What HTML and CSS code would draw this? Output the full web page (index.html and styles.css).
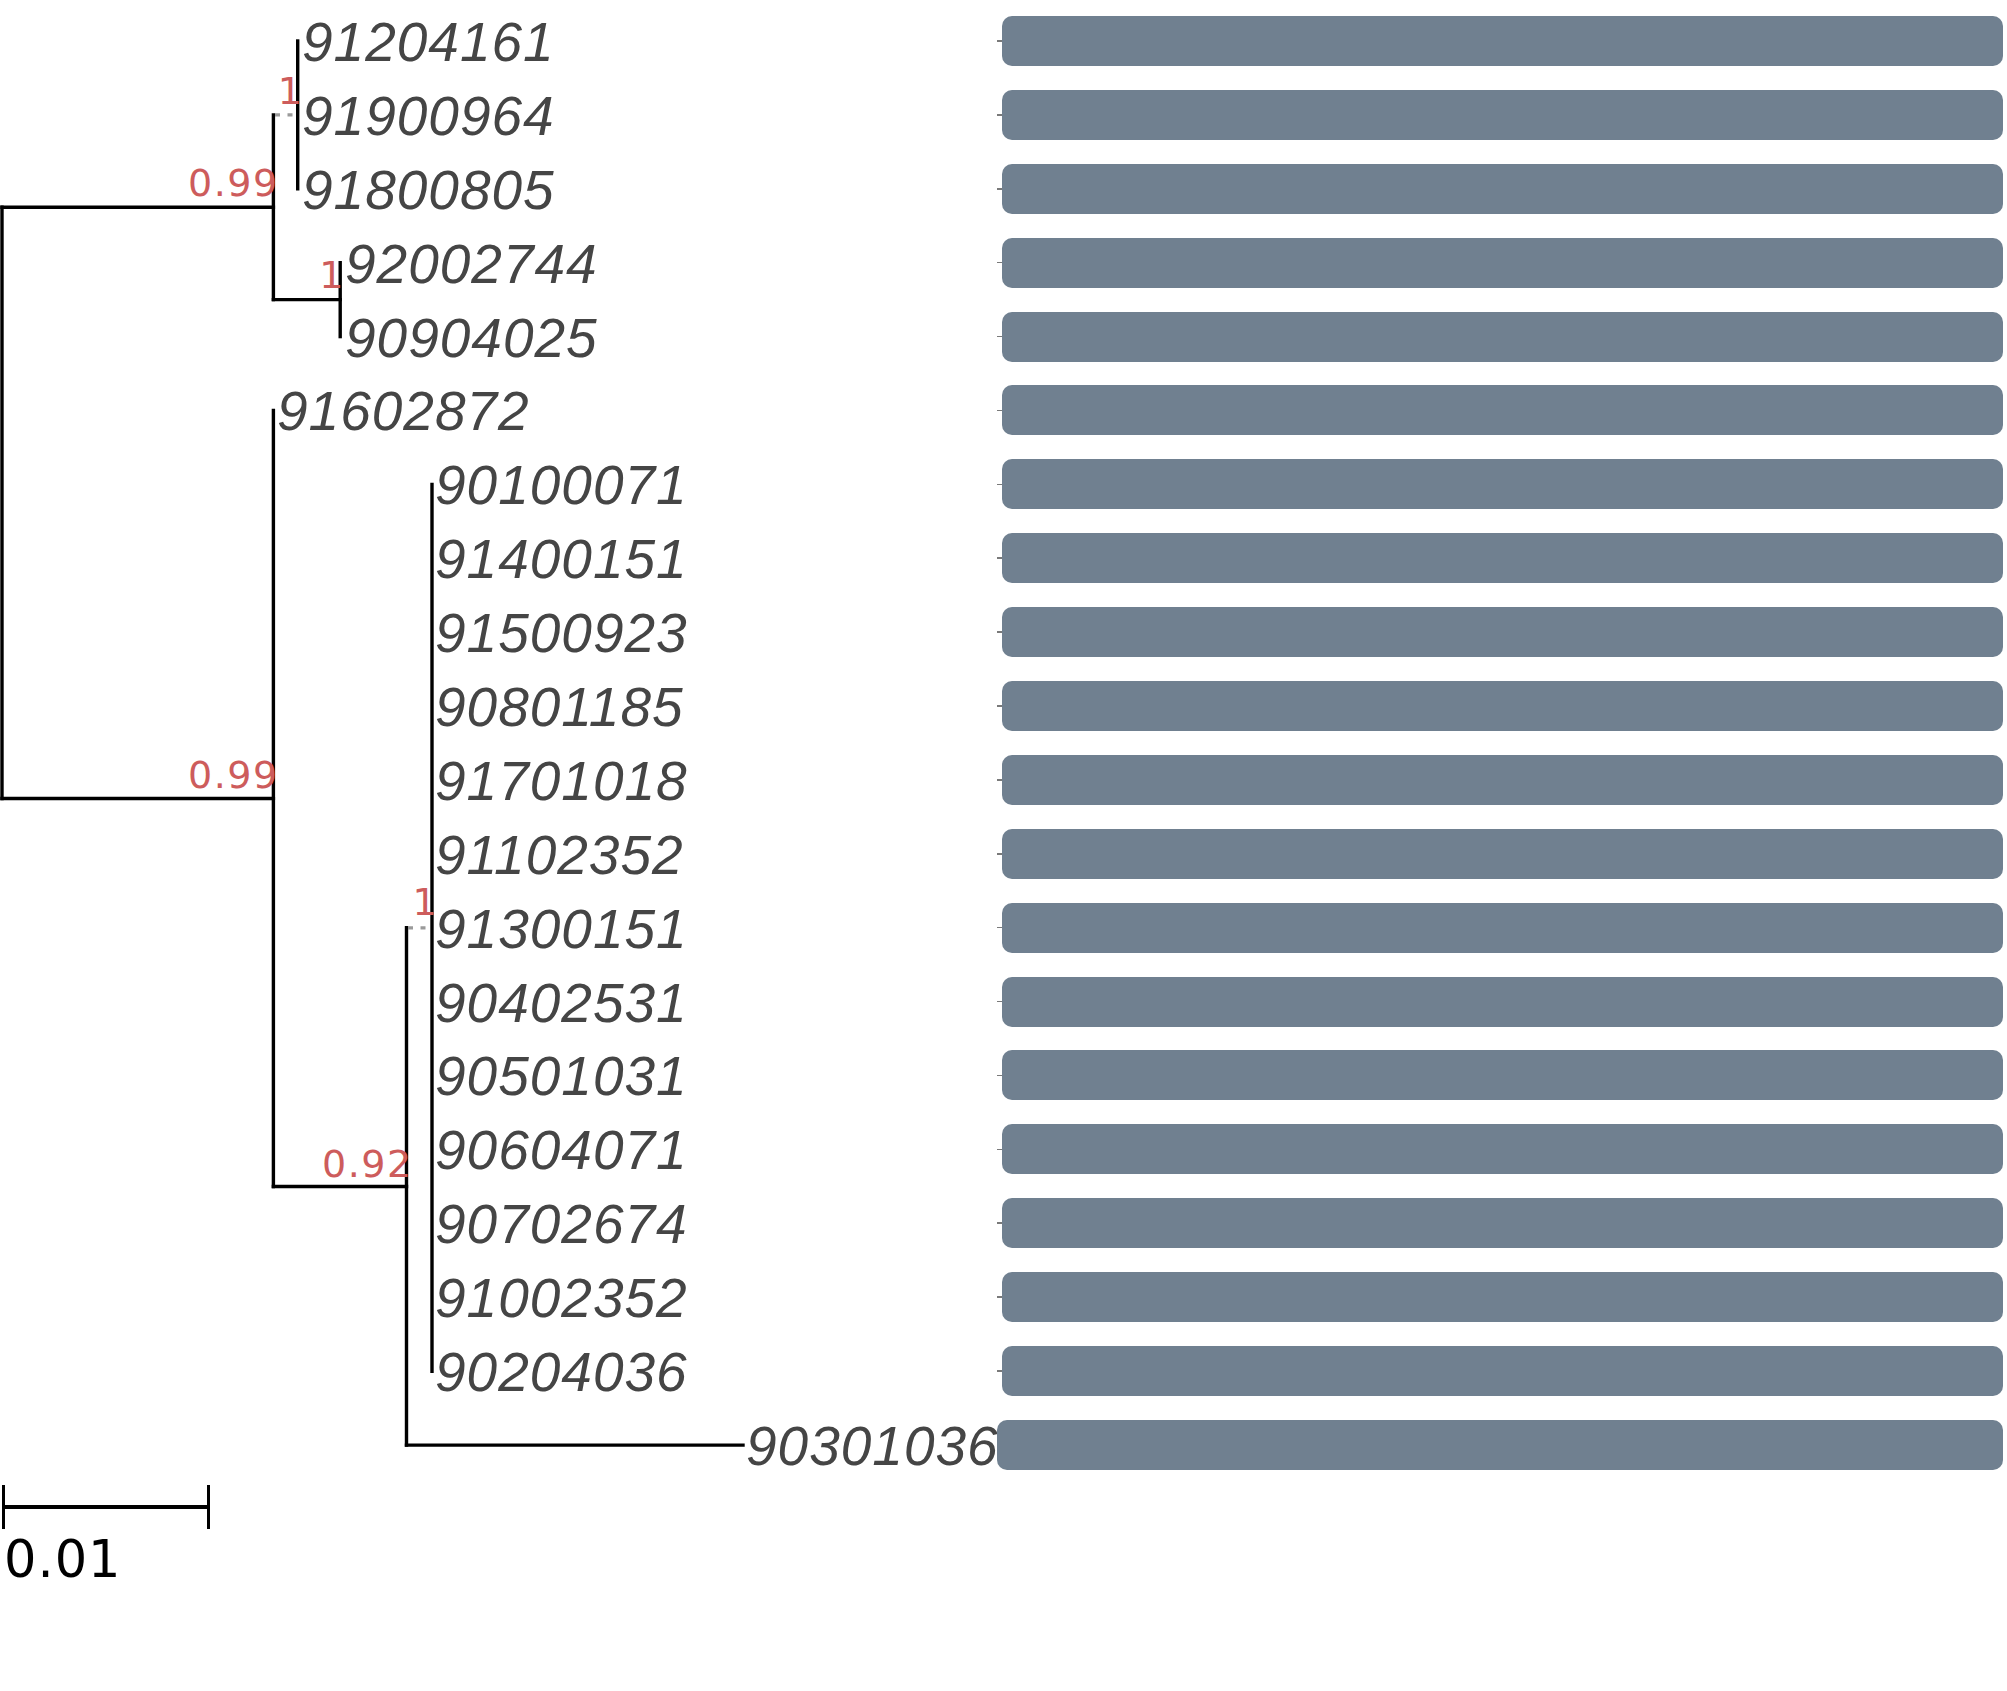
FILE: index.html
```html
<!DOCTYPE html>
<html lang="en">
<head>
<meta charset="utf-8">
<title>Phylogenetic tree</title>
<link rel="stylesheet" href="styles.css">
</head>
<body>
<div class="figure">
  <svg class="tree" width="1000" height="1480" viewBox="0 0 1000 1480" xmlns="http://www.w3.org/2000/svg">
    <g class="branches">
      <!-- root -->
      <line x1="2" y1="207.3" x2="2" y2="798.5"/>
      <line x1="2" y1="207.3" x2="273.4" y2="207.3"/>
      <line x1="2" y1="798.5" x2="273.4" y2="798.5"/>
      <!-- N1 -->
      <line x1="273.4" y1="114.9" x2="273.4" y2="299.65"/>
      <line x1="273.4" y1="299.65" x2="340.2" y2="299.65"/>
      <!-- N2 -->
      <line x1="297.7" y1="41" x2="297.7" y2="188.8"/>
      <!-- N4 -->
      <line x1="340.2" y1="262.7" x2="340.2" y2="336.6"/>
      <!-- N5 -->
      <line x1="273.4" y1="410.5" x2="273.4" y2="1186.45"/>
      <line x1="273.4" y1="1186.45" x2="406.5" y2="1186.45"/>
      <!-- N6 -->
      <line x1="406.5" y1="927.8" x2="406.5" y2="1445.1"/>
      <line x1="406.5" y1="1445.1" x2="743" y2="1445.1"/>
      <!-- N7 -->
      <line x1="432" y1="484.4" x2="432" y2="1371.2"/>
    </g>
    <g class="collapsed">
      <line x1="275" y1="114.9" x2="296" y2="114.9"/>
      <line x1="408" y1="927.8" x2="430" y2="927.8"/>
    </g>
    <g class="support">
      <text x="278.7" y="196.4">0.99</text>
      <text x="303.4" y="104">1</text>
      <text x="344.9" y="288.3">1</text>
      <text x="278.7" y="788">0.99</text>
      <text x="412.7" y="1176.8">0.92</text>
      <text x="438.2" y="915">1</text>
    </g>
  </svg>

  <div class="rows">
    <div class="row"><span class="label tip-n2">91204161</span><div class="bar-cell"><div class="bar"></div></div></div>
    <div class="row"><span class="label tip-n2">91900964</span><div class="bar-cell"><div class="bar"></div></div></div>
    <div class="row"><span class="label tip-n2">91800805</span><div class="bar-cell"><div class="bar"></div></div></div>
    <div class="row"><span class="label tip-n4">92002744</span><div class="bar-cell"><div class="bar"></div></div></div>
    <div class="row"><span class="label tip-n4">90904025</span><div class="bar-cell"><div class="bar"></div></div></div>
    <div class="row"><span class="label tip-n5">91602872</span><div class="bar-cell"><div class="bar"></div></div></div>
    <div class="row"><span class="label tip-n7">90100071</span><div class="bar-cell"><div class="bar"></div></div></div>
    <div class="row"><span class="label tip-n7">91400151</span><div class="bar-cell"><div class="bar"></div></div></div>
    <div class="row"><span class="label tip-n7">91500923</span><div class="bar-cell"><div class="bar"></div></div></div>
    <div class="row"><span class="label tip-n7">90801185</span><div class="bar-cell"><div class="bar"></div></div></div>
    <div class="row"><span class="label tip-n7">91701018</span><div class="bar-cell"><div class="bar"></div></div></div>
    <div class="row"><span class="label tip-n7">91102352</span><div class="bar-cell"><div class="bar"></div></div></div>
    <div class="row"><span class="label tip-n7">91300151</span><div class="bar-cell"><div class="bar"></div></div></div>
    <div class="row"><span class="label tip-n7">90402531</span><div class="bar-cell"><div class="bar"></div></div></div>
    <div class="row"><span class="label tip-n7">90501031</span><div class="bar-cell"><div class="bar"></div></div></div>
    <div class="row"><span class="label tip-n7">90604071</span><div class="bar-cell"><div class="bar"></div></div></div>
    <div class="row"><span class="label tip-n7">90702674</span><div class="bar-cell"><div class="bar"></div></div></div>
    <div class="row"><span class="label tip-n7">91002352</span><div class="bar-cell"><div class="bar"></div></div></div>
    <div class="row"><span class="label tip-n7">90204036</span><div class="bar-cell"><div class="bar"></div></div></div>
    <div class="row"><span class="label tip-long">90301036</span><div class="bar-cell flush"><div class="bar"></div></div></div>
  </div>

  <div class="scale">
    <div class="scale-bar"></div>
    <div class="scale-label">0.01</div>
  </div>
</div>
</body>
</html>
```

FILE: styles.css
```css
html, body {
  margin: 0;
  padding: 0;
  background: #ffffff;
}

body {
  width: 2007px;
  min-height: 1691px;
  font-family: "Liberation Sans", Arial, sans-serif;
}

.figure {
  position: relative;
  width: 2007px;
}

/* tree diagram drawn over the rows */
.tree {
  position: absolute;
  left: 0;
  top: 0;
  overflow: visible;
  pointer-events: none;
}

.branches line {
  stroke: #000000;
  stroke-width: 3.4;
  stroke-linecap: square;
}

.collapsed line {
  stroke: #9a9a9a;
  stroke-width: 3.2;
  stroke-dasharray: 5 7.5;
}

.support text {
  font-family: "DejaVu Sans", sans-serif;
  font-size: 38px;
  letter-spacing: 1.5px;
  fill: #cd5c5c;
  text-anchor: end;
}

/* rows: label + alignment bar */
.rows {
  display: flex;
  flex-direction: column;
  padding-top: 4.05px;
}

.row {
  display: grid;
  grid-template-columns: 997px 1006px;
  align-items: center;
  height: 73.9px;
}

.label {
  font-family: "Liberation Sans", Arial, sans-serif;
  font-style: italic;
  font-size: 55px;
  line-height: 55px;
  letter-spacing: 1px;
  color: #454545;
  padding-top: 3px;
  white-space: nowrap;
}

.tip-n2 { padding-left: 302px; }
.tip-n4 { padding-left: 345px; }
.tip-n5 { padding-left: 277px; }
.tip-n7 { padding-left: 435px; }
.tip-long { padding-left: 746px; }

.bar-cell {
  display: flex;
  align-items: center;
  height: 50px;
}

.bar-cell::before {
  content: "";
  width: 5px;
  height: 1.5px;
  background: #7a7a7a;
  flex: none;
}

.bar-cell.flush::before {
  display: none;
}

.bar {
  flex: 1;
  height: 50px;
  border-radius: 10px;
  background: #708090;
}

/* scale */
.scale {
  display: flex;
  flex-direction: column;
  align-items: flex-start;
  padding-top: 3px;
}

.scale-bar {
  position: relative;
  margin-left: 2px;
  width: 202px;
  height: 44px;
  border-left: 3.5px solid #000000;
  border-right: 3.5px solid #000000;
}

.scale-bar::after {
  content: "";
  position: absolute;
  left: 0;
  right: 0;
  top: 20.25px;
  height: 3.5px;
  background: #000000;
}

.scale-label {
  margin-top: 4.9px;
  padding-left: 4px;
  font-family: "DejaVu Sans", sans-serif;
  font-size: 51px;
  line-height: 51px;
  letter-spacing: 1px;
  color: #000000;
}
```
